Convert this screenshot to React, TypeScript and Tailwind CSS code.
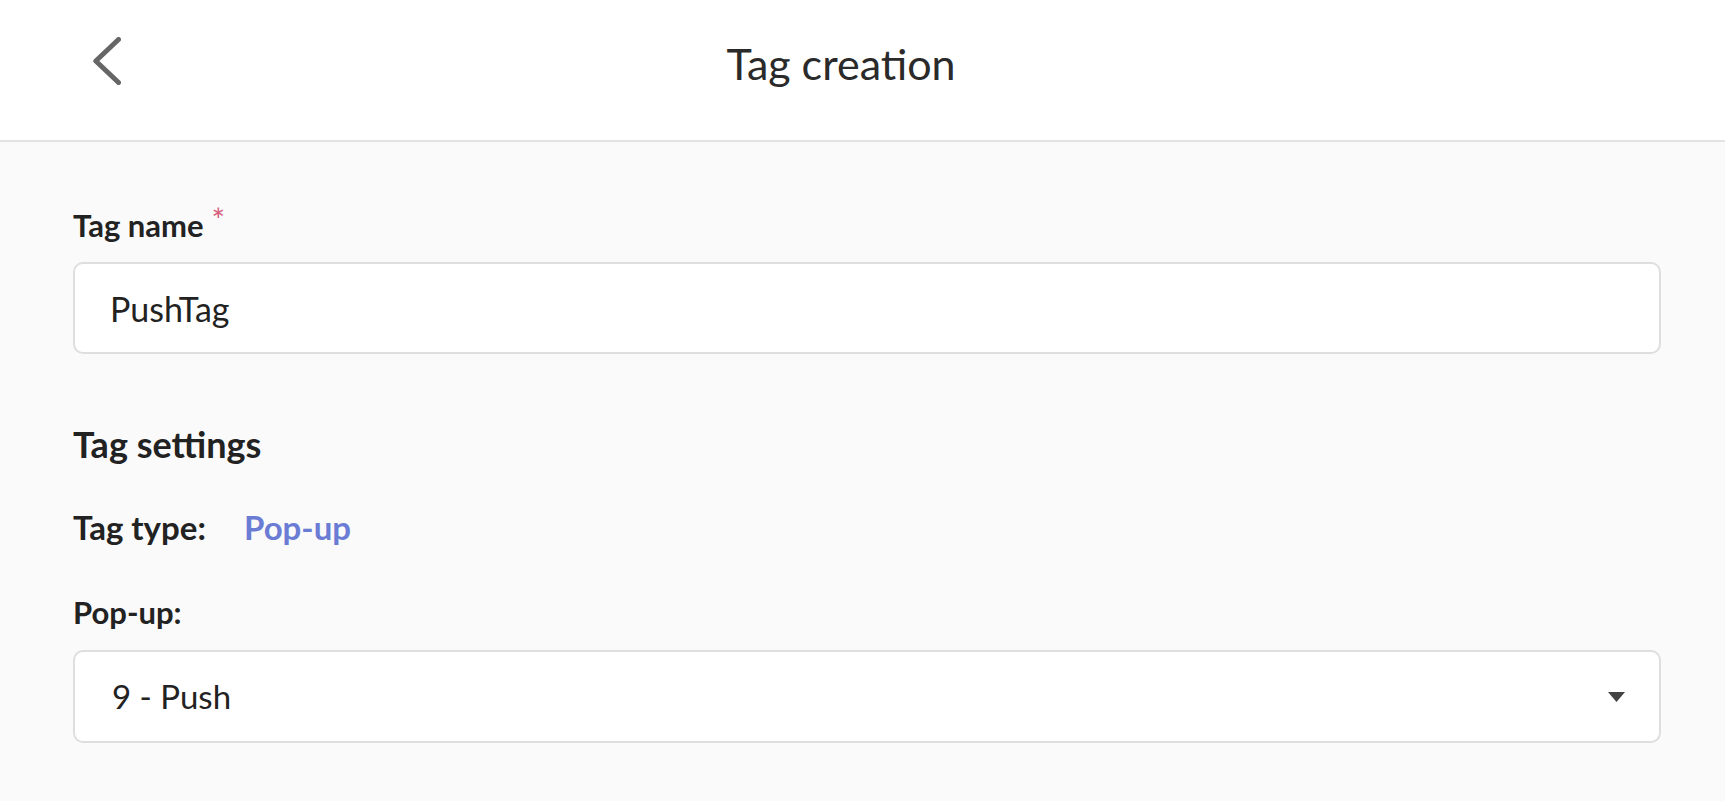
export default function App() {
  return (
    <div className="min-h-[801px] bg-[#fafafa] font-['Lato',sans-serif] text-[#222222]">
      <header className="flex h-[142px] items-start border-b-2 border-[#e3e3e3] bg-white">
        <div className="flex w-[140px] pl-[93px] pt-[37px]">
          <button type="button" aria-label="Back" className="block">
            <svg width="28" height="48" viewBox="0 0 28 48" fill="none">
              <polyline
                points="25.5,2.5 2.8,24 25.5,45.5"
                stroke="#666666"
                strokeWidth="5"
                strokeLinecap="round"
                strokeLinejoin="round"
              />
            </svg>
          </button>
        </div>
        <h1 className="mt-[42px] flex-1 text-center text-[43px] leading-none font-normal text-[#2a2a2a]">
          Tag creation
        </h1>
        <div className="w-[183px]" />
      </header>

      <main className="pl-[73px] pr-[64px]">
        <div className="mt-[68px] flex items-start">
          <span className="text-[31px] leading-none font-bold">Tag name</span>
          <span className="ml-[8px] -mt-[6px] text-[32px] leading-none text-[#d4607a]">*</span>
        </div>
        <div className="mt-[21px] flex h-[92px] items-center rounded-[10px] border-2 border-[#dedede] bg-white pl-[35px] text-[34px] text-[#222222]">
          PushTag
        </div>

        <h2 className="mt-[72px] text-[36px] leading-none font-bold">Tag settings</h2>

        <div className="mt-[49px] flex items-center text-[33px] leading-none">
          <span className="w-[171px] font-bold">Tag type:</span>
          <span className="font-bold text-[#6b7cd5]">Pop-up</span>
        </div>

        <div className="mt-[53px] text-[31px] leading-none font-bold">Pop-up:</div>

        <div className="mt-[22px] flex h-[93px] items-center justify-between rounded-[10px] border-2 border-[#dedede] bg-white pl-[37px] pr-[34px] text-[33px]">
          <span>9 - Push</span>
          <svg width="17" height="10" viewBox="0 0 17 10">
            <polygon points="0,0 17,0 8.5,10" fill="#444444" />
          </svg>
        </div>
      </main>
    </div>
  );
}
